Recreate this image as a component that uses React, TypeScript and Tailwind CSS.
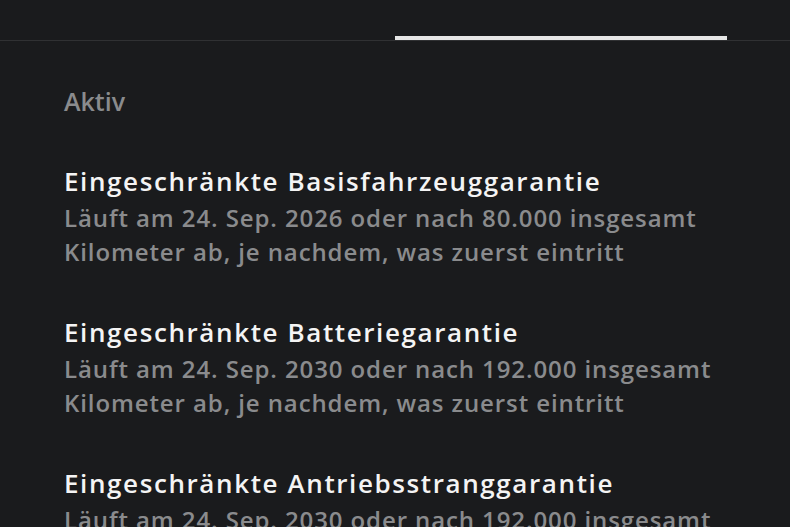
const items = [
  {
    title: "Eingeschränkte Basisfahrzeuggarantie",
    text: "Läuft am 24. Sep. 2026 oder nach 80.000 insgesamt Kilometer ab, je nachdem, was zuerst eintritt",
  },
  {
    title: "Eingeschränkte Batteriegarantie",
    text: "Läuft am 24. Sep. 2030 oder nach 192.000 insgesamt Kilometer ab, je nachdem, was zuerst eintritt",
  },
  {
    title: "Eingeschränkte Antriebsstranggarantie",
    text: "Läuft am 24. Sep. 2030 oder nach 192.000 insgesamt Kilometer ab, je nachdem, was zuerst eintritt",
  },
];

export default function App() {
  return (
    <main className="h-[527px] w-[790px] overflow-hidden bg-[#1a1b1d] font-['Open_Sans',sans-serif] text-white">
      <div className="flex h-[41px] items-end border-b border-[#303133]">
        <div className="ml-[395px] h-[4px] w-[332px] bg-[#e6e6e6]" />
      </div>

      <div className="px-16 pt-[48px]">
        <p className="text-[25px] font-semibold leading-6 text-[#8a8b8d]">Aktiv</p>

        <div className="mt-[52px] flex flex-col gap-[47px]">
          {items.map((item) => (
            <div key={item.title}>
              <h2 className="text-[26px] font-semibold leading-[32px] tracking-[1.6px] text-[#f4f4f4]">{item.title}</h2>
              <p className="mt-[4px] w-[700px] text-[24px] font-semibold leading-[34px] tracking-[0.9px] text-[#8a8b8d]">
                {item.text}
              </p>
            </div>
          ))}
        </div>
      </div>
    </main>
  );
}
